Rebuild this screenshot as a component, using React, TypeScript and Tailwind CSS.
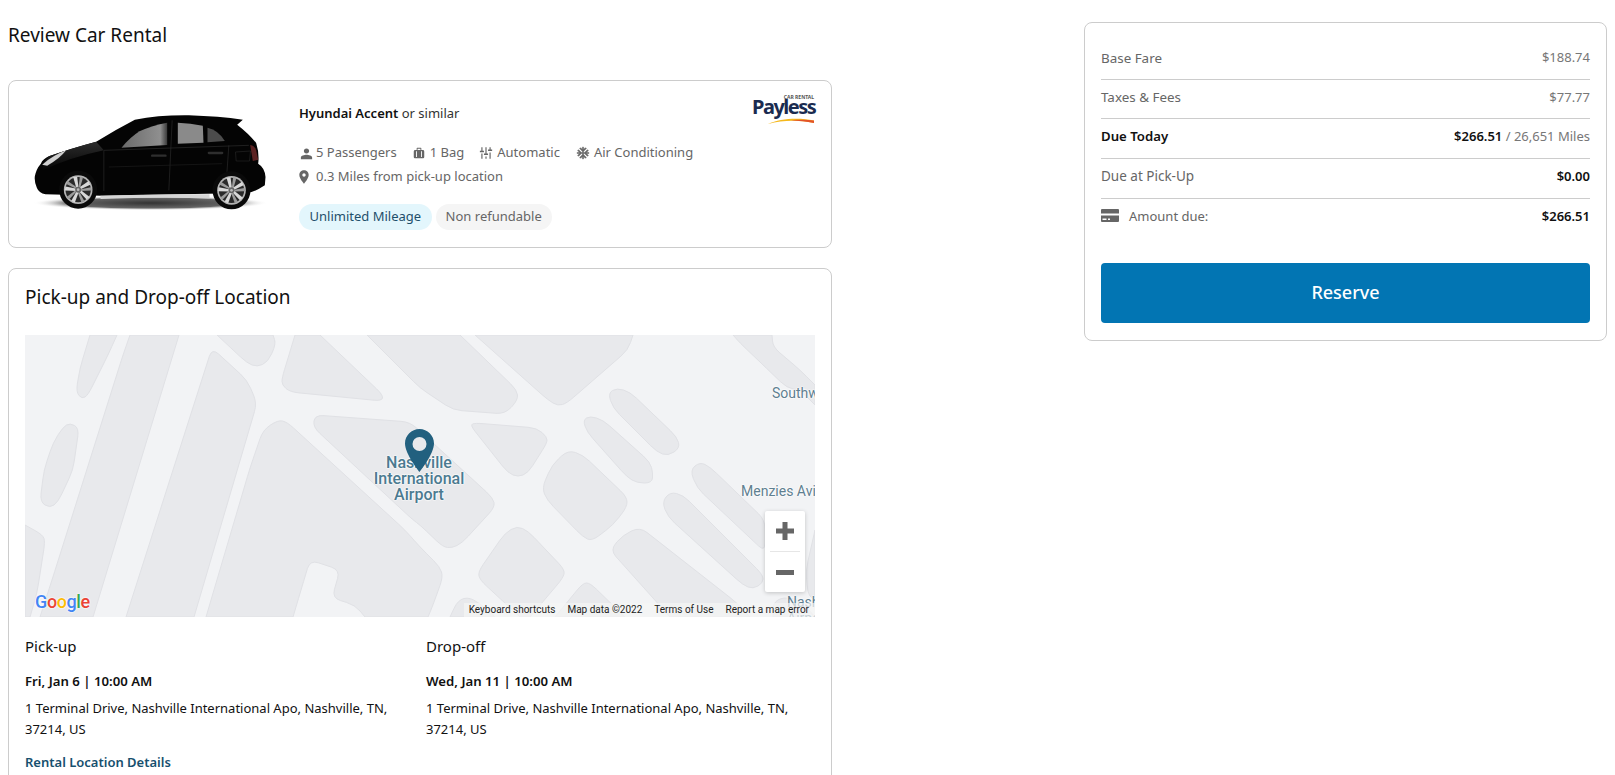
import React from "react";

const Ic = ({ d, className = "w-[15px] h-[15px]" }: { d: string; className?: string }) => (
  <svg viewBox="0 0 24 24" className={className + " fill-[#666] shrink-0"}>
    <path d={d} />
  </svg>
);

const person = "M12 12c2.6 0 4.2-1.7 4.2-4S14.600 4 12 4 7.800 5.700 7.800 8s1.600 4 4.200 4zm0 2c-3.200 0-9 1.500-9 4.300V21h18v-2.700C21 15.500 15.200 14 12 14z";
const bag = "M9 3h6a1 1 0 0 1 1 1v3h2.500A2.500 2.500 0 0 1 21 9.500V19a2 2 0 0 1-2 2H5a2 2 0 0 1-2-2V9.500A2.500 2.500 0 0 1 5.500 7H8V4a1 1 0 0 1 1-1zm.5 1.500V7h5V4.500h-5zM7 9v10h1.500V9H7zm8.500 0v10H17V9h-1.500z";
const tune = "M4 2h2v6h2.500v2.500h-7V8H4V2zm0 11h2v9H4v-9zM11 2h2v11h2.500v2.500h-7V13H11V2zm0 16h2v4h-2v-4zM18 2h2v4h2.500v2.500h-7V6H18V2zm0 9h2v11h-2V11z";
const snow = "M22 11h-4.170l3.240-3.240-1.410-1.420L15 11h-2V9l4.660-4.660-1.420-1.410L13 6.170V2h-2v4.170L7.760 2.930 6.340 4.340 11 9v2H9L4.340 6.340 2.930 7.760 6.170 11H2v2h4.170l-3.240 3.240 1.410 1.420L9 13h2v2l-4.660 4.660 1.420 1.410L11 17.830V22h2v-4.170l3.240 3.240 1.420-1.410L13 15v-2h2l4.660 4.660 1.410-1.420L17.830 13H22z";
const place = "M12 2C8.130 2 5 5.130 5 9c0 5.250 7 13 7 13s7-7.750 7-13c0-3.870-3.130-7-7-7zm0 9.500c-1.380 0-2.500-1.120-2.500-2.500s1.120-2.500 2.500-2.500 2.500 1.120 2.500 2.500-1.120 2.500-2.500 2.500z";

function Wheel({ cx, cy }: { cx: number; cy: number }) {
  const spokes = [0, 72, 144, 216, 288];
  return (
    <g>
      <circle cx={cx} cy={cy} r={57} fill="#0a0a0a" />
      <circle cx={cx} cy={cy} r={43} fill="#b5b5b5" />
      <circle cx={cx} cy={cy} r={38} fill="#2a2a2a" />
      {spokes.map((a) => (
        <g key={a} transform={`rotate(${a} ${cx} ${cy})`}>
          <path d={`M${cx - 4} ${cy} L${cx - 15} ${cy - 38} L${cx - 3} ${cy - 39} L${cx + 2} ${cy} Z`} fill="#d8d8d8" />
          <path d={`M${cx + 4} ${cy} L${cx + 15} ${cy - 38} L${cx + 5} ${cy - 39} L${cx} ${cy} Z`} fill="#9c9c9c" />
        </g>
      ))}
      <circle cx={cx} cy={cy} r={9} fill="#666" />
      <circle cx={cx} cy={cy} r={4} fill="#bbb" />
    </g>
  );
}

function Car() {
  return (
    <svg viewBox="90 125 710 300" className="w-[237px] h-[100px] shrink-0">
      <defs>
        <radialGradient id="sh" cx="50%" cy="50%" r="50%">
          <stop offset="0%" stopColor="#333" />
          <stop offset="70%" stopColor="#666" />
          <stop offset="100%" stopColor="#fff" stopOpacity="0" />
        </radialGradient>
        <linearGradient id="gl" x1="0" y1="0" x2="1" y2="0">
          <stop offset="0%" stopColor="#6a6a6a" />
          <stop offset="85%" stopColor="#8f8f8f" />
          <stop offset="100%" stopColor="#3a3a3a" />
        </linearGradient>
        <linearGradient id="hood" x1="0" y1="0" x2="0" y2="1">
          <stop offset="0%" stopColor="#2c2c2c" />
          <stop offset="100%" stopColor="#050505" />
        </linearGradient>
      </defs>
      <ellipse cx={445} cy={398} rx={352} ry={22} fill="url(#sh)" />
      <path d="M104 352 Q96 335 98 318 Q102 296 116 280 Q122 266 140 258 Q200 236 282 214 Q340 178 398 148 Q470 134 560 135 Q650 138 722 148 L705 163 Q740 190 762 218 Q772 250 768 280 Q788 292 790 320 L788 345 Q760 364 735 368 L300 376 L130 372 Q110 368 104 352 Z" fill="#040404" />
      <path d="M140 258 Q200 236 282 214 L305 240 Q200 262 122 300 Q118 280 140 258 Z" fill="url(#hood)" />
      <path d="M295 376 Q460 370 622 372 L622 384 Q460 380 295 386 Z" fill="#d6d6d6" />
      <path d="M358 232 Q385 200 412 183 Q450 165 495 157 L495 224 Z" fill="url(#gl)" />
      <path d="M527 157 Q565 158 602 166 L604 217 L527 220 Z" fill="#8a8a8a" />
      <path d="M616 172 Q650 180 668 212 L616 216 Z" fill="#4c4c4c" />
      <path d="M120 283 Q150 256 192 240 Q172 266 135 286 Z" fill="#cfcfcf" />
      <path d="M744 224 Q758 226 762 240 L768 268 L752 272 Z" fill="#5c2222" />
      <path d="M305 240 L740 225" stroke="#2e2e2e" strokeWidth="2" fill="none" />
      <path d="M510 150 L500 360 M305 240 L305 362 M680 225 L672 340" stroke="#2a2a2a" strokeWidth="2" fill="none" />
      <path d="M450 256 h40 M620 248 h40" stroke="#2e2e2e" strokeWidth="7" strokeLinecap="round" />
      <path d="M700 245 L745 242 L742 272 L702 272 Z" fill="none" stroke="#252525" strokeWidth="2" />
      <path d="M320 290 L660 280" stroke="#1c1c1c" strokeWidth="2" fill="none" />
      <Wheel cx={228} cy={358} />
      <Wheel cx={688} cy={360} />
    </svg>
  );
}

const shapes: string[] = [
  "90,335 117,335 108,355 88,395 82,399 76,392 80,368",
  "130,335 179,335 93,617 40,617 52,580 123,355",
  "212,348 247,380 257,403 194,617 126,617",
  "217,335 273,335 276,344 268,362 257,367 247,363",
  "295,335 320,335 383,395 382,401 290,392 282,385 282,378",
  "367,335 460,335 517,390 518,400 505,414 453,410 420,388",
  "475,335 633,335 628,350 567,403 558,406 548,400",
  "315,415 410,422 433,443 493,498 495,507 462,543 452,548 443,547 420,525 413,520 313,427",
  "263,430 278,420 287,422 405,530 420,547 440,567 443,577 433,605 428,617 365,617 355,605 332,598 340,570 310,560 301,590 293,617 206,617 250,468",
  "70,423 79,428 73,470 58,502 50,508 40,502 44,470 53,443 63,427",
  "25,525 43,535 45,542 37,593 30,617 25,617",
  "470,425 475,423 537,428 547,437 547,443 528,473 518,477 508,473",
  "583,420 590,416 603,420 650,462 653,473 652,483 637,483 627,477 587,432",
  "608,393 617,388 630,392 677,437 680,448 668,456 657,452 613,408",
  "542,488 552,465 568,450 583,455 627,497 627,507 613,525 592,541 583,537 547,500",
  "690,470 700,462 710,467 765,520 765,552 697,488",
  "662,502 670,492 683,495 763,575 763,583 753,589 743,585 668,517",
  "610,550 623,535 640,527 737,603 750,617 670,617",
  "478,572 505,533 517,526 528,531 565,570 563,578 530,617 520,617 480,580",
  "555,617 583,583 590,583 625,617",
  "450,617 458,600 470,597 488,610 495,617",
  "733,335 740,343 760,362 787,388 800,390 815,405 815,385 800,370 773,347 772,335",
  "773,617 773,603 783,597 800,600 815,617",
  "806,570 815,530 815,600 808,595",
];

function roundedPath(points: string): string {
  const pts = points.split(" ").map((s) => s.split(",").map(Number));
  const n = pts.length;
  let d = "";
  const onEdge = (p: number[]) => p[1] === 335 || p[1] === 617 || p[0] === 25 || p[0] === 815;
  pts.forEach((p, i) => {
    const a = pts[(i - 1 + n) % n];
    const b = pts[(i + 1) % n];
    if (onEdge(p)) {
      d += `${i === 0 ? "M" : "L"}${p[0]} ${p[1]} `;
      return;
    }
    const la = Math.hypot(a[0] - p[0], a[1] - p[1]);
    const lb = Math.hypot(b[0] - p[0], b[1] - p[1]);
    const ra = Math.min(9, la / 2);
    const rb = Math.min(9, lb / 2);
    const s = [p[0] + ((a[0] - p[0]) * ra) / la, p[1] + ((a[1] - p[1]) * ra) / la];
    const e = [p[0] + ((b[0] - p[0]) * rb) / lb, p[1] + ((b[1] - p[1]) * rb) / lb];
    d += `${i === 0 ? "M" : "L"}${s[0]} ${s[1]} Q${p[0]} ${p[1]} ${e[0]} ${e[1]} `;
  });
  return d + "Z";
}

function MapLayer() {
  return (
    <svg viewBox="25 335 790 282" className="absolute inset-0 w-full h-full">
      {shapes.map((p, i) => (
        <path key={i} d={roundedPath(p)} fill="#e8e9ec" stroke="#e0e1e5" strokeWidth="1" strokeLinejoin="round" />
      ))}
    </svg>
  );
}

const mapLabel = "absolute font-['Roboto',sans-serif] text-[14px] leading-[16px] text-[#5f7f90] whitespace-nowrap [text-shadow:0_0_2px_#fff,0_0_2px_#fff,0_0_2px_#fff]";

function GoogleMap() {
  return (
    <div className="relative h-[282px] w-full overflow-hidden bg-[#f2f3f5]">
      <MapLayer />
      <div className={mapLabel + " left-[747px] top-[50px]"}>Southwest</div>
      <div className={mapLabel + " left-[716px] top-[148px]"}>Menzies Aviation</div>
      <div className={mapLabel + " left-[762px] top-[259px]"}>Nashville</div>
      <div className={mapLabel + " left-[762px] top-[275px]"}>Airport</div>
      <div className="absolute left-[324px] top-[120px] w-[140px] text-center font-['Roboto',sans-serif] font-medium text-[16px] leading-[16px] text-[#4b7a90] [text-shadow:0_0_2px_#fff,0_0_2px_#fff,0_0_2px_#fff]">
        Nashville
        <br />
        International
        <br />
        Airport
      </div>
      <svg viewBox="0 0 29 43" className="absolute left-[380px] top-[94px] w-[29px] h-[43px]">
        <path fillRule="evenodd" d="M14.500 0C6.500 0 0 6.500 0 14.500 0 25 14.500 43 14.500 43S29 25 29 14.500C29 6.500 22.500 0 14.500 0zm0 8a7 7 0 1 1 0 14 7 7 0 0 1 0-14z" fill="#22607f" />
      </svg>
      <div className="absolute left-[740px] top-[176px] w-[40px] h-[81px] bg-white rounded-[2px] shadow-[0_1px_4px_rgba(0,0,0,0.2)] flex flex-col items-center">
        <div className="h-[40px] flex items-center justify-center">
          <svg viewBox="0 0 18 18" className="w-[18px] h-[18px] fill-[#666]">
            <path d="M6.500 0h5v6.500H18v5h-6.500V18h-5v-6.500H0v-5h6.500z" />
          </svg>
        </div>
        <div className="w-[30px] h-px bg-[#e6e6e6]" />
        <div className="h-[40px] flex items-center justify-center">
          <div className="w-[18px] h-[5px] bg-[#666]" />
        </div>
      </div>
      <div className="absolute left-[10px] top-[256px] font-['Roboto',sans-serif] font-medium text-[18px] leading-[22px] tracking-[-0.4px] [text-shadow:0_0_2px_#fff,0_0_2px_#fff]">
        <span className="text-[#4285f4]">G</span>
        <span className="text-[#ea4335]">o</span>
        <span className="text-[#fbbc05]">o</span>
        <span className="text-[#4285f4]">g</span>
        <span className="text-[#34a853]">l</span>
        <span className="text-[#ea4335]">e</span>
      </div>
      <div className="absolute right-0 bottom-0 h-[14px] pb-[2px] flex items-center bg-[#f5f5f5]/70 font-['Roboto',sans-serif] text-[10px] text-[#222] whitespace-nowrap">
        <span className="pl-[5px] pr-[12px]">Keyboard shortcuts</span>
        <span className="pr-[12px]">Map data ©2022</span>
        <span className="pr-[12px]">Terms of Use</span>
        <span className="pr-[6px]">Report a map error</span>
      </div>
    </div>
  );
}

function Spec({ d, label, cls, gap }: { d: string; label: string; cls?: string; gap: string }) {
  return (
    <span className={"flex items-center " + gap}>
      <Ic d={d} className={cls} />
      {label}
    </span>
  );
}

function Location({ title, when }: { title: string; when: string }) {
  return (
    <div>
      <div className="text-[15px] leading-[22px] text-[#111]">{title}</div>
      <div className="mt-[14px] text-[13.2px] leading-[20px] font-semibold text-[#111]">{when}</div>
      <div className="mt-[7px] text-[13px] leading-[21px] text-[#111]">
        1 Terminal Drive, Nashville International Apo, Nashville, TN, 37214, US
      </div>
    </div>
  );
}

function Row({ h, pb, left, right, last }: { h: string; pb: string; left: React.ReactNode; right: React.ReactNode; last?: boolean }) {
  return (
    <div className={"flex items-center justify-between box-border " + pb + " " + h + (last ? "" : " border-b border-[#ccc]")}>
      {left}
      {right}
    </div>
  );
}

export default function App() {
  return (
    <div className="h-screen overflow-hidden bg-white flex items-start pl-2 font-['Noto_Sans',sans-serif] text-[13px]">
      <div className="w-[824px] shrink-0">
        <h1 className="pt-[23px] h-[80px] text-[19px] leading-[24px] font-normal text-[#111]">Review Car Rental</h1>
        <div className="h-[168px] border border-[#ccc] rounded-[8px] flex pl-[23px] pr-[16px] pt-[9px] relative">
          <div className="pt-[22px]">
            <Car />
          </div>
          <div className="pl-[30px] pt-[13px] flex-1">
            <div className="leading-[20px] text-[#333]">
              <span className="font-semibold text-[#111]">Hyundai Accent</span> or similar
            </div>
            <div className="mt-[20px] flex items-center h-[20px] text-[#666]">
              <Spec d={person} label="5 Passengers" gap="gap-[2px]" />
              <span className="w-[15px]" />
              <Spec d={bag} label="1 Bag" gap="gap-[4px]" cls="w-[14px] h-[14px]" />
              <span className="w-[15px]" />
              <Spec d={tune} label="Automatic" gap="gap-[4px]" cls="w-[14px] h-[14px]" />
              <span className="w-[16px]" />
              <Spec d={snow} label="Air Conditioning" gap="gap-[4px]" cls="w-[14px] h-[14px] stroke-[#666] stroke-1" />
            </div>
            <div className="mt-[4px] flex items-center h-[20px] text-[#666] gap-[4px] -ml-[3px]">
              <Ic d={place} className="w-[16px] h-[16px]" />
              0.3 Miles from pick-up location
            </div>
            <div className="mt-[17px] flex gap-[4px]">
              <span className="h-[26px] px-[10.5px] flex items-center rounded-full bg-[#e3f6fc] text-[#1f4f6b]">Unlimited Mileage</span>
              <span className="h-[26px] px-[10px] flex items-center rounded-full bg-[#f5f5f5] text-[#666]">Non refundable</span>
            </div>
          </div>
          <div className="absolute right-[17px] top-[12px] w-[62px] h-[30px]">
            <div className="absolute right-0 top-[1px] text-[5px] leading-[6px] font-bold text-[#555] whitespace-nowrap">CAR RENTAL</div>
            <div className="absolute left-0 top-[2px] text-[20px] leading-[24px] font-bold tracking-[-1.5px] text-[#1a2b50] whitespace-nowrap">Payless</div>
            <svg viewBox="0 0 48 6" className="absolute right-0 bottom-[-1px] w-[46px] h-[6px]">
              <path d="M0 6C12 1 30 -1 48 2.500L48 5C32 2 16 2 0 6Z" fill="#f5b81c" />
              <path d="M24 2.200C32 1.500 41 1.600 48 2.500L48 5C40 3.500 32 2.800 24 2.200Z" fill="#e2522a" />
            </svg>
          </div>
        </div>
        <div className="mt-[20px] h-[600px] border border-[#ccc] rounded-[8px] px-[16px]">
          <h2 className="pt-[16px] h-[66px] text-[19px] leading-[25px] font-normal text-[#111]">Pick-up and Drop-off Location</h2>
          <GoogleMap />
          <div className="mt-[18px] grid grid-cols-2 gap-x-[12px] w-[790px]">
            <Location title="Pick-up" when="Fri, Jan 6 | 10:00 AM" />
            <Location title="Drop-off" when="Wed, Jan 11 | 10:00 AM" />
          </div>
          <div className="mt-[12px] text-[13px] leading-[20px] font-semibold text-[#17506e]">Rental Location Details</div>
        </div>
      </div>
      <div className="ml-[252px] mt-[22px] w-[523px] h-[319px] border border-[#ccc] rounded-[8px] px-[16px] pt-[17px]">
        <Row h="h-[40px]" pb="pb-[3px]" left={<span className="text-[#666] text-[13.4px]">Base Fare</span>} right={<span className="text-[#777]">$188.74</span>} />
        <Row h="h-[39px]" pb="pb-[3px]" left={<span className="text-[#666] text-[13.4px]">Taxes &amp; Fees</span>} right={<span className="text-[#777]">$77.77</span>} />
        <Row
          h="h-[40px]"
          pb="pb-[4px]"
          left={<span className="font-semibold text-[13.2px] text-[#111]">Due Today</span>}
          right={
            <span className="text-[#777]">
              <span className="font-semibold text-[#111]">$266.51</span> / 26,651 Miles
            </span>
          }
        />
        <Row h="h-[40px]" pb="pb-[4px]" left={<span className="text-[#666] text-[13.5px]">Due at Pick-Up</span>} right={<span className="font-semibold text-[#111]">$0.00</span>} />
        <Row
          h="h-[40px]"
          pb="pb-[5px]"
          last
          left={
            <span className="flex items-center text-[#666] gap-[10px]">
              <svg viewBox="0 0 18 13" className="w-[18px] h-[13px] -mt-[2px]">
                <path fillRule="evenodd" d="M0 1a1 1 0 0 1 1-1h16a1 1 0 0 1 1 1v11a1 1 0 0 1-1 1H1a1 1 0 0 1-1-1zM0 4.500v2h18v-2zM1.500 9.500v1.500h4V9.500zM7 9.500v1.500h2V9.500z" fill="#666" />
              </svg>
              Amount due:
            </span>
          }
          right={<span className="font-semibold text-[#111]">$266.51</span>}
        />
        <button className="mt-[24px] w-full h-[60px] pb-[2px] rounded-[4px] bg-[#0275b3] text-white text-[18px] font-medium">Reserve</button>
      </div>
    </div>
  );
}
